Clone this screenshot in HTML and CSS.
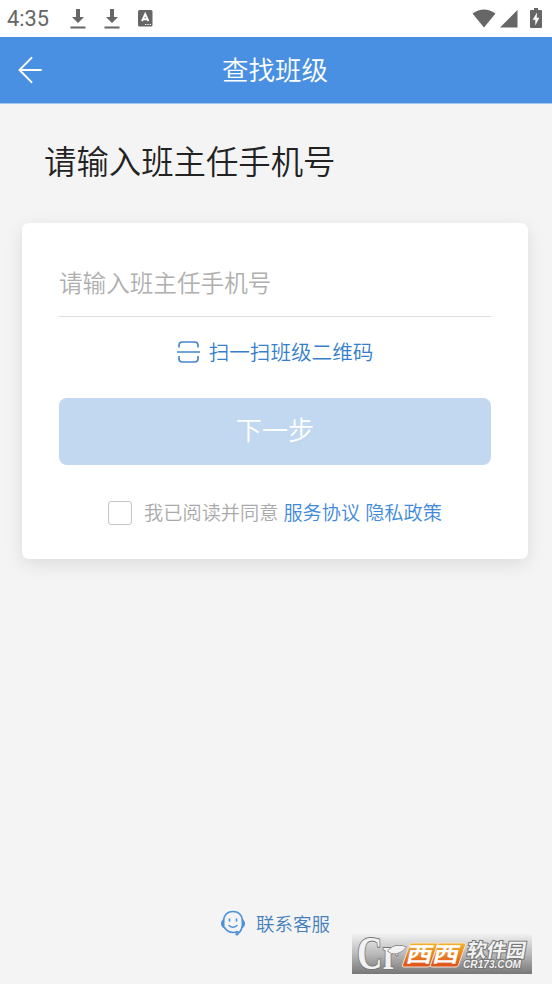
FILE: index.html
```
<!DOCTYPE html>
<html lang="zh-CN">
<head>
    <meta charset="UTF-8">
    <meta name="viewport" content="width=device-width, initial-scale=1.0">
    <title>查找班级</title>
    <link rel="stylesheet" href="styles.css">
</head>
<body>
    <div class="status-bar">
        <span class="time">4:35</span>
        <svg class="download" width="16" height="22" viewBox="0 0 16 22"><path d="M6 1h4v8h4l-6 6-6-6h4zM.5 18.5h15v2H.5z"/></svg>
        <svg class="download" width="16" height="22" viewBox="0 0 16 22"><path d="M6 1h4v8h4l-6 6-6-6h4zM.5 18.5h15v2H.5z"/></svg>
        <svg class="keyboard" width="15" height="17" viewBox="0 0 15 17">
            <rect width="14.5" height="16.5" rx="1.5"/>
            <path class="mark" d="M4 11.2 7.2 4l3.2 7.2M5.2 9.2h4" stroke-width="1.9"/>
            <path class="mark" d="M7 14.5h1.3m1 0h1.3m1 0h1.3" stroke-width="1.2"/>
        </svg>
        <div class="status-right">
            <svg width="24" height="19" viewBox="0 0 24 19"><path d="M.5 4.5Q12-3.5 23.5 4.5L12 18.5z"/></svg>
            <svg width="18" height="19" viewBox="0 0 18 19"><path d="M17.5 1v17.5H0z"/></svg>
            <svg class="battery" width="12" height="20" viewBox="0 0 12 20">
                <path d="M4 0h4v2h3q1 0 1 1v16q0 1-1 1H1q-1 0-1-1V3q0-1 1-1h3z"/>
                <path class="bolt" d="M7 4.5 2.7 11.8h2.6V17.5L9.4 9.8H6.7z"/>
            </svg>
        </div>
    </div>

    <header class="nav-bar">
        <svg class="back" width="24" height="28" viewBox="0 0 24 28"><path d="M13.5 1.8 1.5 14l12 12.2M1.5 14H23"/></svg>
        <h1>查找班级</h1>
    </header>

    <main>
        <h2>请输入班主任手机号</h2>
        <form class="card">
            <input class="phone" type="tel" placeholder="请输入班主任手机号">
            <a class="scan">
                <svg width="23" height="22" viewBox="0 0 23 22"><path d="M2 6.5V4.5Q2 1 5.500 1h12Q21 1 21 4.500v2M0 11h23M2 15v2.500Q2 21 5.500 21h12Q21 21 21 17.500V15"/></svg>
                <span>扫一扫班级二维码</span>
            </a>
            <button class="next" type="button">下一步</button>
            <div class="agree">
                <input class="check" type="checkbox">
                <span>我已阅读并同意</span>
                <a class="terms">服务协议</a>
                <a class="privacy">隐私政策</a>
            </div>
        </form>
    </main>

    <footer class="service">
        <svg width="26" height="26" viewBox="0 0 26 26">
            <path d="M3.500 10Q5 1.500 13 1.500T22.500 10M4.500 17.500q3 5 8.500 5 2.500 0 4.500-1M22 17q-1 5-4.500 6.500M9 15.500q4 3.500 8 0M9.500 9v2M16.500 9v2"/>
            <path class="fill" d="M4.500 9v9.500Q1 17 1 13.500T4.500 9M21.500 9v9.500q3.500-1.500 3.500-5T21.500 9"/>
            <circle class="fill" cx="17" cy="24" r="1.600"/>
        </svg>
        <span>联系客服</span>
    </footer>

    <svg class="watermark" width="180" height="40" viewBox="0 0 180 40">
        <defs>
            <linearGradient id="bar" x2="0" y2="1"><stop offset="0" stop-color="#f1f1f1"/><stop offset=".5" stop-color="#b9b9b9"/><stop offset="1" stop-color="#777"/></linearGradient>
            <linearGradient id="tile" x2="0" y2="1"><stop offset="0" stop-color="#f3b52f"/><stop offset="1" stop-color="#dd4f1e"/></linearGradient>
        </defs>
        <rect width="180" height="40" fill="url(#bar)"/>
        <text class="logo-c" x="5" y="35" textLength="41" lengthAdjust="spacingAndGlyphs">Cr</text>
        <path class="leaf" d="M36 17q6-8 18-4-6 8-15 6z"/>
        <path class="tile" d="M60 9h24q2 0 1.500 2l-7 20q-.6 2-2.500 2H52q-2 0-1.500-2l7-20q.5-2 2.500-2z"/>
        <path class="tile" d="M88 9h24q2 0 1.500 2l-7 20q-.6 2-2.500 2H80q-2 0-1.500-2l7-20q.5-2 2.500-2z"/>
        <text class="west" transform="translate(53 28) skewX(-13)" textLength="53" lengthAdjust="spacingAndGlyphs">西西</text>
        <text class="park" transform="translate(114 23) skewX(-10)" textLength="59" lengthAdjust="spacingAndGlyphs">软件园</text>
        <text class="domain" x="111" y="34" textLength="58" lengthAdjust="spacingAndGlyphs">CR173.COM</text>
    </svg>
</body>
</html>
```
FILE: styles.css
```
* {
    box-sizing: border-box;
}
body {
    position: relative;
    display: flex;
    flex-direction: column;
    height: 984px;
    margin: 0;
    background: #f4f4f4;
    font-family: "Noto Sans CJK SC", sans-serif;
    font-weight: 350;
    overflow: hidden;
}
svg {
    display: block;
    flex-shrink: 0;
}
h1, h2 {
    margin: 0;
    font-weight: inherit;
}
.status-bar {
    display: flex;
    align-items: center;
    height: 37px;
    padding: 0 10px 0 7px;
    background: #fff;
    fill: #666;
}
.time {
    width: 63px;
    color: #666;
    font: 450 21.8px/39px Roboto, sans-serif;
}
.download {
    margin-right: 18px;
}
.keyboard .mark {
    fill: none;
    stroke: #fff;
}
.status-right {
    display: flex;
    align-items: center;
    margin-left: auto;
}
.status-right svg + svg {
    margin-left: 4px;
}
.status-right .battery {
    margin: -2px 0 0 12px;
}
.battery .bolt {
    fill: #fff;
}
.nav-bar {
    display: flex;
    align-items: center;
    height: 67px;
    padding: 0 18px;
    border-bottom: 1px solid #a4c8ef;
    background: #4990e2;
    color: #fff;
}
.nav-bar h1 {
    flex: 1;
    padding: 0 26px 3px 0;
    font-size: 26.5px;
    line-height: 63px;
    text-align: center;
}
.back {
    fill: none;
    stroke: #fff;
    stroke-width: 1.9;
    stroke-linecap: round;
    stroke-linejoin: round;
}
main {
    padding: 32px 24px 0 22px;
}
h2 {
    padding-left: 22px;
    color: #222;
    font-size: 32.4px;
    line-height: 48px;
}
.card {
    height: 336px;
    margin-top: 38.5px;
    padding: 36px 37px 0;
    border-radius: 7px;
    background: #fff;
    box-shadow: 0 5px 18px rgba(0, 0, 0, 0.1);
}
.phone {
    display: block;
    width: 100%;
    height: 58px;
    padding: 0 0 10px;
    border: 0;
    border-bottom: 1px solid #ddd;
    outline: 0;
    font: inherit;
    font-size: 23.6px;
}
.phone::placeholder {
    color: #afafaf;
}
.scan {
    display: flex;
    align-items: center;
    justify-content: center;
    gap: 9px;
    height: 71px;
    margin-bottom: 10px;
    color: #387fcb;
    font-size: 20.6px;
    line-height: 30px;
}
.scan span {
    padding-bottom: 2px;
}
.scan svg {
    fill: none;
    stroke: #4486cc;
    stroke-width: 1.7;
}
.next {
    display: block;
    width: 100%;
    height: 67px;
    padding: 0 0 4px;
    border: 0;
    border-radius: 8px;
    background: #c2d8f0;
    color: #fff;
    font: inherit;
    font-size: 26.2px;
}
.agree {
    display: flex;
    align-items: center;
    justify-content: center;
    height: 95px;
    color: #aaa;
    font-size: 19.2px;
    line-height: 26px;
}
.check {
    width: 24px;
    height: 24px;
    margin: 1px 12px 0 0;
    border: 1.5px solid #c4c4c8;
    border-radius: 3px;
    background: #fff;
    appearance: none;
}
.agree a {
    margin-left: 5px;
    color: #4089dc;
}
.service {
    display: flex;
    align-items: center;
    justify-content: center;
    gap: 10px;
    height: 30px;
    margin-top: auto;
    margin-bottom: 46px;
    padding-right: 2px;
    color: #4580bd;
    font-size: 18.5px;
    line-height: 28px;
}
.service svg {
    fill: none;
    stroke: #4d90dc;
    stroke-width: 1.6;
    stroke-linecap: round;
}
.service .fill {
    fill: #4d90dc;
    stroke: none;
}
/* site stamp laid over the bottom corner */
.watermark {
    position: absolute;
    right: 20px;
    bottom: 10px;
    overflow: visible;
}
.watermark text,
.leaf {
    fill: #f2f2f2;
    stroke: #777;
    stroke-width: 1.2;
    paint-order: stroke;
}
.watermark .logo-c {
    stroke-width: 2;
    font: 700 46px "Liberation Serif", serif;
}
.watermark .tile {
    fill: url(#tile);
    stroke: #f6e4cf;
}
.watermark .west {
    fill: #fff;
    stroke: none;
    font: 700 21px "Noto Sans CJK SC", sans-serif;
}
.watermark .park {
    stroke-width: 2;
    font: 700 19px "Noto Sans CJK SC", sans-serif;
}
.watermark .domain {
    stroke-width: 2;
    font: italic 700 10px "Liberation Sans", sans-serif;
}
```
